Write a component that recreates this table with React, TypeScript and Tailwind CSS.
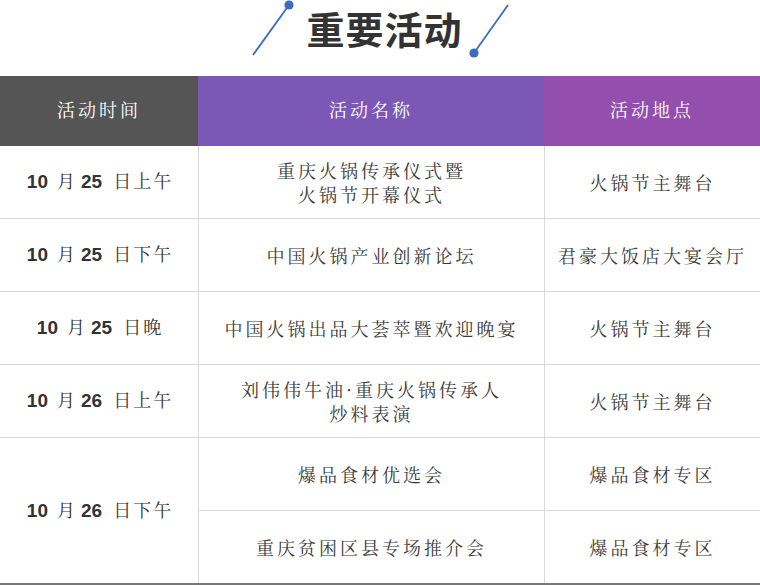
const serif = { fontFamily: '"Noto Serif CJK SC", "Noto Sans CJK SC", serif' };

const rows = [
  { time: ['10', '25', '日上午'], name: ['重庆火锅传承仪式暨', '火锅节开幕仪式'], place: '火锅节主舞台' },
  { time: ['10', '25', '日下午'], name: ['中国火锅产业创新论坛'], place: '君豪大饭店大宴会厅' },
  { time: ['10', '25', '日晚'], name: ['中国火锅出品大荟萃暨欢迎晚宴'], place: '火锅节主舞台' },
  { time: ['10', '26', '日上午'], name: ['刘伟伟牛油·重庆火锅传承人', '炒料表演'], place: '火锅节主舞台' },
];

function TimeText({ t }: { t: string[] }) {
  return (
    <span className="flex items-baseline text-[18px] text-[#333]" style={serif}>
      <span className="font-bold font-['Liberation_Sans'] text-[19px]">{t[0]}</span>
      <span className="ml-[9px]">月</span>
      <span className="ml-[6px] font-bold font-['Liberation_Sans'] text-[19px]">{t[1]}</span>
      <span className="ml-[11px] tracking-[2px] -mr-[2px]">{t[2]}</span>
    </span>
  );
}

function Cell({ children, first = false, className = '' }: { children: React.ReactNode; first?: boolean; className?: string }) {
  return (
    <div
      className={`flex flex-col items-center justify-center text-center border-b border-[#d9d9d9] ${first ? '' : 'border-l'} ${className}`}
    >
      {children}
    </div>
  );
}

export default function App() {
  return (
    <div className="w-[760px] h-[585px] bg-white overflow-hidden">
      {/* title */}
      <div className="h-[76px] flex justify-center items-start pl-[2px]">
        <svg width="48" height="62" viewBox="0 0 48 62">
          <line x1="6" y1="55" x2="42" y2="5" stroke="#3b6cbf" strokeWidth="1.8" />
          <circle cx="42" cy="5" r="4.6" fill="#3b6cbf" />
        </svg>
        <h1
          className="ml-[11px] mr-[4px] mt-[8px] text-[38px] leading-[40px] font-bold text-[#333] tracking-[1px]"
          style={{ fontFamily: '"Noto Sans CJK SC", sans-serif' }}
        >
          重要活动
        </h1>
        <svg width="48" height="62" viewBox="0 0 48 62">
          <line x1="7" y1="53" x2="41" y2="5" stroke="#3b6cbf" strokeWidth="1.8" />
          <circle cx="7" cy="53" r="4.6" fill="#3b6cbf" />
        </svg>
      </div>

      {/* table */}
      <div className="grid grid-cols-[198px_346px_216px]">
        <div className="h-[70px] pb-[4px] bg-[#555555] flex items-center justify-center text-white text-[18px] tracking-[3px]" style={serif}>
          活动时间
        </div>
        <div className="h-[70px] pb-[4px] bg-[#7b58b5] flex items-center justify-center text-white text-[18px] tracking-[3px]" style={serif}>
          活动名称
        </div>
        <div className="h-[70px] pb-[4px] bg-[#944ead] flex items-center justify-center text-white text-[18px] tracking-[3px]" style={serif}>
          活动地点
        </div>

        {rows.map((r, i) => (
          <div key={i} className="contents">
            <Cell first className="h-[73px]">
              <TimeText t={r.time} />
            </Cell>
            <Cell className="h-[73px] text-[18px] leading-[24px] text-[#3a3a3a] tracking-[3px]">
              {r.name.map(n => (
                <span key={n} style={serif}>{n}</span>
              ))}
            </Cell>
            <Cell className="h-[73px] text-[18px] text-[#3a3a3a] tracking-[3px]">
              <span style={serif}>{r.place}</span>
            </Cell>
          </div>
        ))}

        <Cell first className="row-span-2 h-[145px] !border-b-0">
          <TimeText t={['10', '26', '日下午']} />
        </Cell>
        <Cell className="h-[73px] text-[18px] text-[#3a3a3a] tracking-[3px]">
          <span style={serif}>爆品食材优选会</span>
        </Cell>
        <Cell className="h-[73px] text-[18px] text-[#3a3a3a] tracking-[3px]">
          <span style={serif}>爆品食材专区</span>
        </Cell>
        <Cell className="h-[72px] text-[18px] text-[#3a3a3a] tracking-[3px] !border-b-0">
          <span style={serif}>重庆贫困区县专场推介会</span>
        </Cell>
        <Cell className="h-[72px] text-[18px] text-[#3a3a3a] tracking-[3px] !border-b-0">
          <span style={serif}>爆品食材专区</span>
        </Cell>
      </div>
      <div className="h-[2px] bg-[#777]" />
    </div>
  );
}
